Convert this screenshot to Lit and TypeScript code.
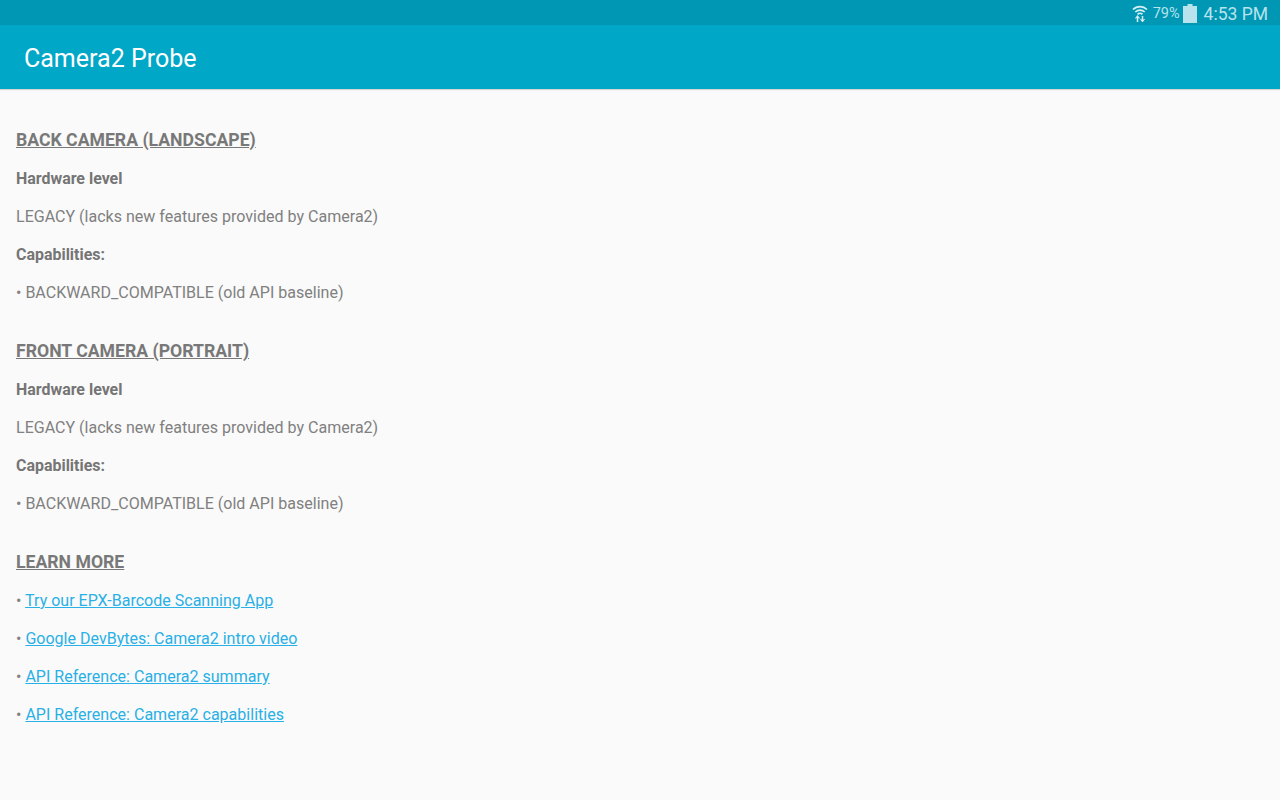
import { LitElement, html, css } from "lit";
import { customElement } from "lit/decorators.js";

@customElement("app-root")
export class AppRoot extends LitElement {
  static styles = css`
    :host { display: block; width: 1280px; height: 800px; overflow: hidden; background: #fafafa; font-family: Roboto, sans-serif; }
    .status { height: 25px; background: #0097b4; display: flex; align-items: center; justify-content: flex-end; padding-right: 12px; color: #b9e3ec; }
    .status svg { display: block; }
    .wifi { margin-right: 5px; }
    .pct { font-size: 14.5px; margin-right: 3px; margin-top: 2px; }
    .batt { margin-top: 2px; }
    .time { font-size: 17.5px; margin-left: 7px; margin-top: 2px; }
    .bar { height: 64px; background: #00a7c7; display: flex; align-items: center; padding-left: 24px; color: #fff; font-size: 25px; padding-top: 2px; box-sizing: border-box; box-shadow: 0 1px 1px rgba(0,0,0,.15); }
    .content { padding: 40px 16px 0; color: #808080; font-size: 16.05px; }
    h2 { margin: 0; font-size: 17.65px; font-weight: 700; line-height: 22px; text-decoration: underline; color: #787878; }
    p { margin: 0; line-height: 22px; margin-top: 16px; }
    h2 + p { margin-top: 17px; }
    .sec { margin-top: 36px; }
    b { font-weight: 700; font-size: 15.95px; color: #757575; }
    a { color: #29b0e6; text-decoration: underline; }
  `;
  render() {
    const cam = (t: string, first: boolean) => html`
      <h2 class=${first ? "" : "sec"}>${t}</h2>
      <p><b>Hardware level</b></p>
      <p>LEGACY (lacks new features provided by Camera2)</p>
      <p><b>Capabilities:</b></p>
      <p>• BACKWARD_COMPATIBLE (old API baseline)</p>`;
    return html`
      <div class="status">
        <svg class="wifi" width="16" height="18" viewBox="0 0 16 18" fill="none" stroke="#d8f0f5" stroke-width="1.7">
          <path d="M1 5.5a10 10 0 0 1 14 0M3.3 8a6.8 6.8 0 0 1 9.4 0M5.6 10.4a3.4 3.4 0 0 1 4.8 0"/>
          <path d="M5.5 13v5M10.5 12v5" stroke-width="1.5"/>
          <path d="M3.5 14.5l2-2.5 2 2.5M8.5 15l2 2.5 2-2.5" stroke-width="1.2"/>
        </svg>
        <span class="pct">79%</span>
        <svg class="batt" width="14" height="19" viewBox="0 0 14 19"><path d="M4.5 0h5v2H14v17H0V2h4.5z" fill="#b9e3ec"/></svg>
        <span class="time">4:53 PM</span>
      </div>
      <div class="bar">Camera2 Probe</div>
      <div class="content">
        ${cam("BACK CAMERA (LANDSCAPE)", true)}
        ${cam("FRONT CAMERA (PORTRAIT)", false)}
        <h2 class="sec">LEARN MORE</h2>
        <p>• <a>Try our EPX-Barcode Scanning App</a></p>
        <p>• <a>Google DevBytes: Camera2 intro video</a></p>
        <p>• <a>API Reference: Camera2 summary</a></p>
        <p>• <a>API Reference: Camera2 capabilities</a></p>
      </div>`;
  }
}
